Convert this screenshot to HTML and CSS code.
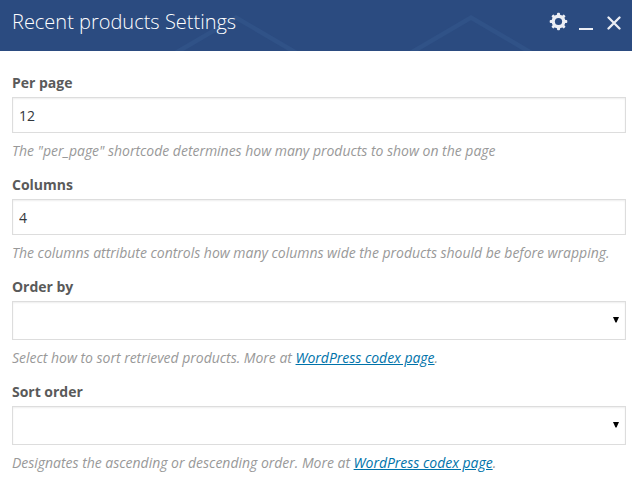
FILE: index.html
```html
<!DOCTYPE html>
<html lang="en">
<head>
<meta charset="utf-8">
<title>Recent products Settings</title>
<link rel="stylesheet" href="styles.css">
</head>
<body>
<header class="panel-header">
  <svg class="pattern" width="632" height="51" viewBox="0 0 632 51" aria-hidden="true">
    <path d="M173 54.500L236 17.500L299 54.500M408 54.500L471 17.500L534 54.500"/>
  </svg>
  <h1 class="title">Recent products Settings</h1>
  <div class="controls">
    <svg class="gear" width="18" height="18" viewBox="-8.500 -8.500 18 18" role="img" aria-label="Settings">
      <g>
        <rect x="-1.500" y="-8.800" width="3" height="17.600" rx="1"/>
        <rect x="-1.500" y="-8.800" width="3" height="17.600" rx="1" transform="rotate(45)"/>
        <rect x="-1.500" y="-8.800" width="3" height="17.600" rx="1" transform="rotate(90)"/>
        <rect x="-1.500" y="-8.800" width="3" height="17.600" rx="1" transform="rotate(135)"/>
      </g>
      <circle r="6.900"/>
      <circle class="hole" r="3.600"/>
    </svg>
    <span class="minimize"></span>
    <svg class="close" width="14" height="14" viewBox="0 0 14 14" role="img" aria-label="Close"><path d="M1.500 1.500L12.500 12.500M12.500 1.500L1.500 12.500"/></svg>
  </div>
</header>
<main class="form">
  <div class="field">
    <label class="label" for="per-page">Per page</label>
    <input class="control" id="per-page" type="text" value="12">
    <p class="description">The "per_page" shortcode determines how many products to show on the page</p>
  </div>
  <div class="field">
    <label class="label" for="columns">Columns</label>
    <input class="control" id="columns" type="text" value="4">
    <p class="description">The columns attribute controls how many columns wide the products should be before wrapping.</p>
  </div>
  <div class="field">
    <span class="label">Order by</span>
    <div class="control select"><svg width="6" height="6" viewBox="0 0 6 6"><path d="M0 0H6L3.500 5.500H2.500Z"/></svg></div>
    <p class="description">Select how to sort retrieved products. More at <a href="#">WordPress codex page</a>.</p>
  </div>
  <div class="field">
    <span class="label">Sort order</span>
    <div class="control select"><svg width="6" height="6" viewBox="0 0 6 6"><path d="M0 0H6L3.500 5.500H2.500Z"/></svg></div>
    <p class="description">Designates the ascending or descending order. More at <a href="#">WordPress codex page</a>.</p>
  </div>
</main>
</body>
</html>
```
FILE: styles.css
```css
* { box-sizing: border-box; }
body {
  margin: 0;
  background: #fff;
  font: 14px/20px "Open Sans", sans-serif;
  color: #5a5a5a;
  overflow: hidden;
}
.panel-header {
  position: relative;
  height: 51px;
  padding: 0 11px 0 12px;
  display: flex;
  justify-content: space-between;
  align-items: flex-start;
  background: #2b4b80;
}
.pattern {
  position: absolute;
  inset: 0;
}
.pattern path {
  fill: none;
  stroke: #305287;
  stroke-width: 4.500;
}
.title {
  position: relative;
  margin: 8px 0 0;
  font-size: 20px;
  line-height: 28px;
  font-weight: 300;
  color: #fff;
  white-space: nowrap;
}
.controls {
  position: relative;
  display: flex;
  align-items: flex-end;
  height: 30px;
  fill: #eceef4;
}
.gear {
  align-self: flex-start;
  margin-top: 13px;
  margin-right: 11px;
  overflow: visible;
}
.hole { fill: #2b4b80; }
.minimize {
  width: 14px;
  height: 2px;
  margin-right: 14px;
  background: #eceef4;
}
.close {
  fill: none;
  stroke: #eceef4;
  stroke-width: 2.300;
  stroke-linecap: round;
}
.form {
  padding: 22px 6px 0 12px;
  display: flex;
  flex-direction: column;
  gap: 14px;
}
.label {
  display: block;
  margin-bottom: 4px;
  font-weight: 700;
  letter-spacing: -.02px;
}
.control {
  display: block;
  width: 100%;
  height: 36px;
  margin: 0;
  padding: 0 6px;
  border: 1px solid #ddd;
  border-radius: 0;
  background: #fff;
  box-shadow: inset 0 1px 2px rgba(0, 0, 0, .07);
  font: inherit;
  color: #32373c;
}
.select {
  height: 39px;
  display: flex;
  align-items: center;
  justify-content: flex-end;
}
.select svg { margin-bottom: 1px; }
.description {
  margin: 8px 0 0;
  font-style: italic;
  color: #999;
  letter-spacing: -.022px;
  white-space: nowrap;
}
.description a {
  color: #0073aa;
  text-decoration: underline;
}
```
